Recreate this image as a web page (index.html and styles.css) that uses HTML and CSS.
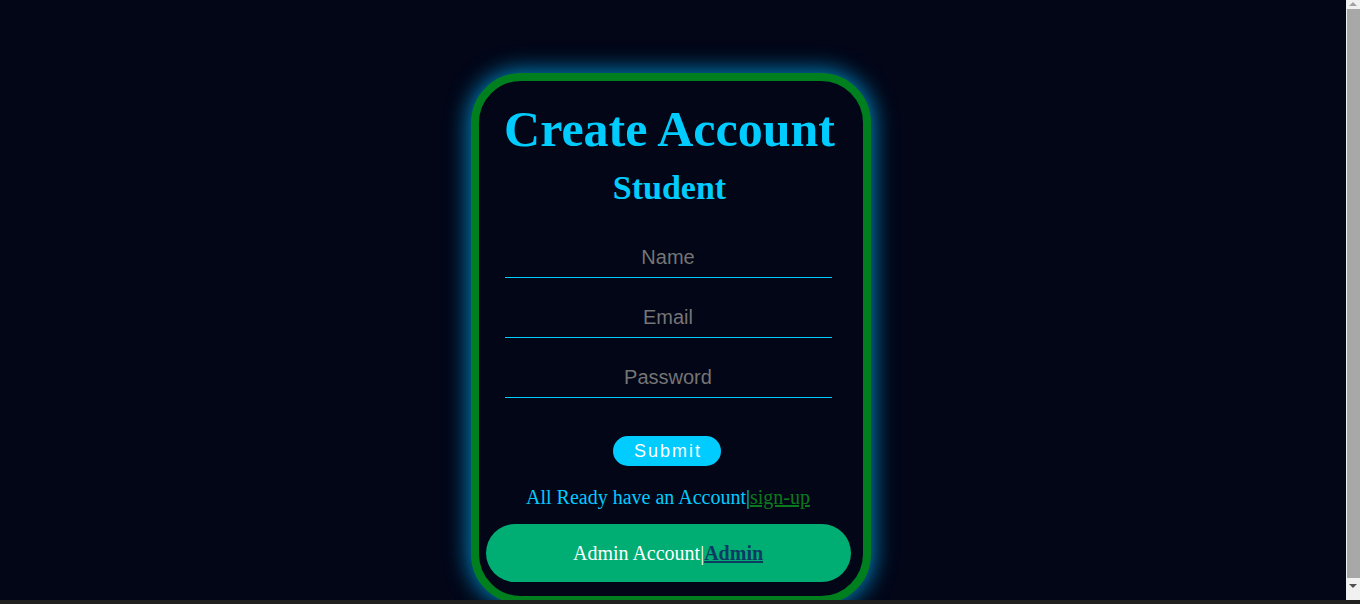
FILE: index.html
```html
<!DOCTYPE html>
<html lang="en">
<head>
<meta charset="utf-8">
<title>Create Account</title>
<link rel="stylesheet" href="styles.css">
</head>
<body>
  <main class="card">
    <h1 class="title">Create Account</h1>
    <h2 class="subtitle">Student</h2>
    <form class="form">
      <div class="field-wrap"><input class="field" type="text" placeholder="Name"></div>
      <div class="field-wrap"><input class="field" type="email" placeholder="Email"></div>
      <div class="field-wrap"><input class="field" type="password" placeholder="Password"></div>
      <button class="submit" type="button">Submit</button>
    </form>
    <p class="already">All Ready have an Account|<a class="signup" href="#">sign-up</a></p>
    <div class="admin">Admin Account|<a class="admin-link" href="#">Admin</a></div>
  </main>
  <div class="fake-scrollbar" aria-hidden="true">
    <span class="arrow-up"></span>
    <span class="thumb"></span>
    <span class="arrow-down"></span>
  </div>
  <div class="bottom-strip"></div>
</body>
</html>
```

FILE: styles.css
```css
html, body {
  margin: 0;
  background: #020617;
}

body {
  padding: 73px 19px 16px 0;
  font-family: "Liberation Serif", "Times New Roman", serif;
}

.card {
  box-sizing: border-box;
  width: 400px;
  margin: 0 auto;
  border: 8px solid #007f1f;
  border-radius: 50px;
  background: #020617;
  padding: 21px 12px 14px 7px;
  box-shadow: 0 0 22px 3px rgba(0, 180, 255, 0.7);
}

.title {
  margin: 0 0 0 3px;
  font: 700 50px/55px "Liberation Serif", "Times New Roman", serif;
  color: #00ccff;
  text-align: center;
  white-space: nowrap;
}

.subtitle {
  margin: 12px 0 0 3px;
  font: 700 34px/38px "Liberation Serif", "Times New Roman", serif;
  color: #00ccff;
  text-align: center;
}

.form {
  display: flex;
  flex-direction: column;
  align-items: center;
  margin-top: 31px;
}

.field-wrap {
  box-sizing: border-box;
  width: 327px;
  height: 40px;
  margin-bottom: 20px;
  border-bottom: 1px solid #00ccff;
}

.field-wrap:nth-child(3) {
  margin-bottom: 0;
}

.field {
  box-sizing: border-box;
  display: block;
  width: 100%;
  height: 39px;
  margin: 0;
  padding: 0;
  border: none;
  background: transparent;
  outline: none;
  text-align: center;
  font: 20px "Liberation Sans", Arial, sans-serif;
  color: #ccc;
}

.field::placeholder {
  color: #757575;
}

.submit {
  margin: 38px 2px 0 0;
  height: 30px;
  padding: 0 19px 0 21px;
  border: none;
  border-radius: 15px;
  background: #00ccff;
  color: #fff;
  font: 18px "Liberation Sans", Arial, sans-serif;
  letter-spacing: 2px;
  cursor: pointer;
}

.already {
  margin: 20px 0 0;
  font-size: 20px;
  line-height: 23px;
  color: #00ccff;
  text-align: center;
}

.signup {
  color: #0a7a1c;
}

.admin {
  display: flex;
  align-items: center;
  justify-content: center;
  height: 58px;
  margin-top: 15px;
  border-radius: 29px;
  background: #00ad73;
  color: #fff;
  font-size: 20px;
}

.admin-link {
  color: #0c3a63;
  font-weight: 700;
}

.fake-scrollbar {
  position: fixed;
  top: 0;
  right: 0;
  bottom: 0;
  width: 14px;
  background: #f1f1f1;
  display: flex;
  flex-direction: column;
  align-items: center;
}

.arrow-up,
.arrow-down {
  flex: none;
  width: 0;
  height: 0;
  border-left: 4px solid transparent;
  border-right: 4px solid transparent;
}

.arrow-up {
  margin-top: 2px;
  border-bottom: 4px solid #a3a3a3;
}

.arrow-down {
  margin-top: 6px;
  border-top: 4px solid #505050;
}

.thumb {
  flex: none;
  width: 13px;
  height: 569px;
  margin-top: 3px;
  margin-left: 1px;
  background: #a8a8a8;
}

.bottom-strip {
  position: fixed;
  left: 0;
  right: 0;
  bottom: 0;
  height: 4px;
  background: #21211f;
}
```
